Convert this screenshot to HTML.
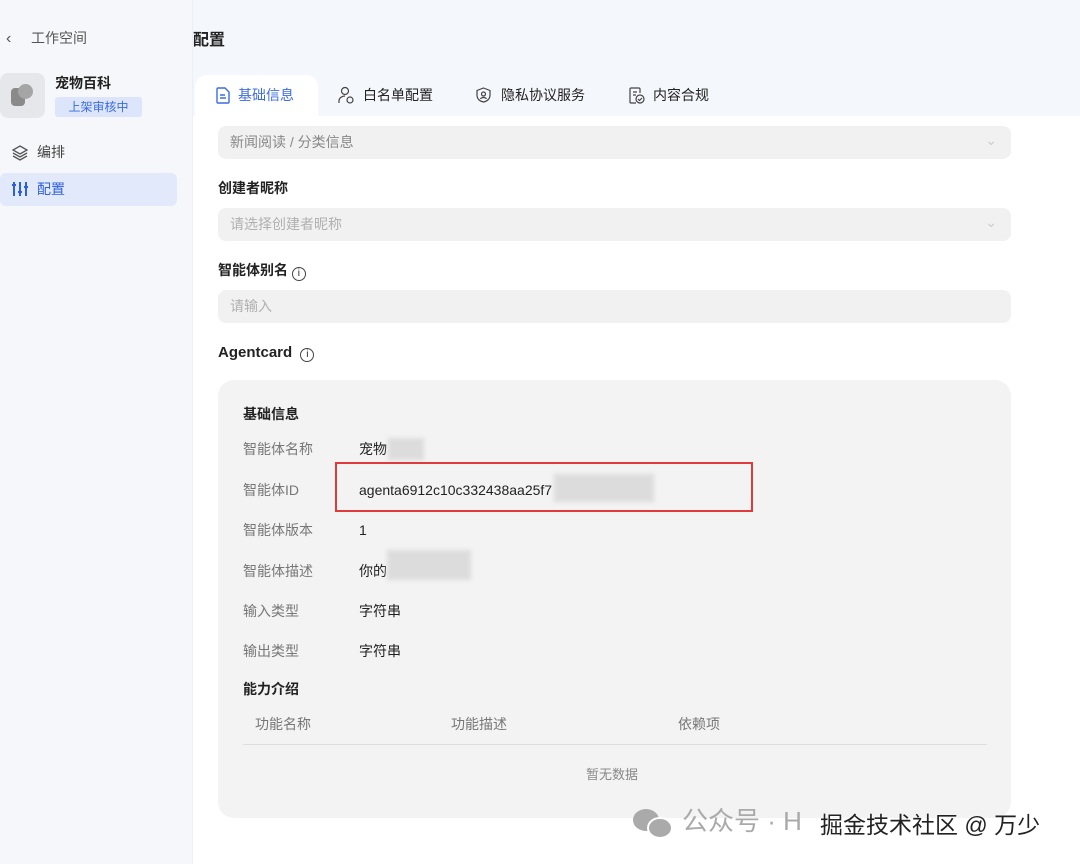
<!DOCTYPE html>
<html><head><meta charset="utf-8"><style>
*{margin:0;padding:0;box-sizing:border-box}
body{width:1080px;height:864px;overflow:hidden;background:#fff;font-family:"Liberation Sans","Noto Sans CJK SC",sans-serif;color:#222;position:relative;line-height:1.2}
.a{position:absolute;white-space:nowrap}
.side{position:absolute;left:0;top:0;width:193px;height:864px;background:#f5f7fb;border-right:1px solid #eceff4}
.topbar{position:absolute;left:193px;top:0;width:887px;height:128px;background:#f4f7fb}
.inp{position:absolute;left:218px;width:793px;height:33px;background:#f1f1f1;border-radius:8px;font-size:14px;color:#b0b0b0;padding:8px 12px}
.lab{font-size:14px;color:#777}
.val{font-size:14px;color:#222}
.blur{position:absolute;background:#dcdcdc;filter:blur(2px)}
</style></head><body>
<div style="position:absolute;left:0;top:0;width:1080px;height:3px;background:#eef0f3"></div>
<div class="side"></div>
<div class="topbar"></div>
<div class="a" style="left:6px;top:29px;font-size:16px;color:#555">‹</div>
<div class="a" style="left:31px;top:30px;font-size:14px;color:#555">工作空间</div>
<div class="a" style="left:0;top:73px;width:45px;height:45px;background:#e6e7ea;border-radius:8px"></div>
<div class="a" style="left:11px;top:88px;width:14px;height:18px;background:#8a8a8a;border-radius:4px"></div>
<div class="a" style="left:18px;top:84px;width:15px;height:15px;background:#a5a5a5;border-radius:50%"></div>
<div class="a" style="left:55px;top:75px;font-size:14px;font-weight:bold">宠物百科</div>
<div class="a" style="left:55px;top:97px;width:87px;height:20px;background:#dde5fb;border-radius:3px;color:#3c6ce0;font-size:12px;text-align:center;line-height:20px">上架审核中</div>
<svg class="a" style="left:11px;top:144px" width="18" height="18" viewBox="0 0 18 18" fill="none" stroke="#555" stroke-width="1.3"><path d="M9 2L16 6 9 10 2 6Z"/><path d="M2 9l7 4 7-4"/><path d="M2 12l7 4 7-4"/></svg>
<div class="a" style="left:37px;top:144px;font-size:14px;color:#444">编排</div>
<div class="a" style="left:0;top:173px;width:177px;height:33px;background:#e2e9fb;border-radius:6px"></div>
<svg class="a" style="left:11px;top:181px" width="18" height="16" viewBox="0 0 18 16" fill="none" stroke="#2d5fdc" stroke-width="2"><path d="M3 1v14M9 1v14M15 1v14"/><path d="M1 4h4M7 11h4M13 6h4"/></svg>
<div class="a" style="left:37px;top:181px;font-size:14px;color:#2d5fdc">配置</div>
<div class="a" style="left:193px;top:31px;font-size:16px;font-weight:bold">配置</div>
<div class="a" style="left:195px;top:75px;width:123px;height:53px;background:#fff;border-radius:12px 12px 0 0"></div>
<div style="position:absolute;left:193px;top:116px;width:887px;height:748px;background:#fff"></div>
<svg class="a" style="left:216px;top:87px" width="14" height="17" viewBox="0 0 14 17" fill="none" stroke="#3c6ce0" stroke-width="1.4"><path d="M1 2a1 1 0 011-1h7l4 4v10a1 1 0 01-1 1H2a1 1 0 01-1-1Z"/><path d="M4 8h5M4 11h6"/></svg>
<div class="a" style="left:238px;top:87px;font-size:14px;color:#3c6ce0">基础信息</div>
<svg class="a" style="left:338px;top:86px" width="17" height="18" viewBox="0 0 17 18" fill="none" stroke="#444" stroke-width="1.2"><circle cx="7" cy="5" r="3.5"/><path d="M1 17v-2c0-3 3-5 6-5"/><circle cx="12" cy="14" r="3"/></svg>
<div class="a" style="left:363px;top:87px;font-size:14px">白名单配置</div>
<svg class="a" style="left:476px;top:87px" width="15" height="16" viewBox="0 0 15 16" fill="none" stroke="#444" stroke-width="1.2"><path d="M7.5 1L14 3.5V8c0 4-3 6.5-6.5 7C4 14.5 1 12 1 8V3.5Z"/><circle cx="7.5" cy="7" r="2"/><path d="M4.5 12c1-2 5-2 6 0"/></svg>
<div class="a" style="left:501px;top:87px;font-size:14px">隐私协议服务</div>
<svg class="a" style="left:629px;top:87px" width="16" height="17" viewBox="0 0 16 17" fill="none" stroke="#444" stroke-width="1.2"><path d="M11 6V2a1 1 0 00-1-1H2a1 1 0 00-1 1v13a1 1 0 001 1h5"/><path d="M4 5h4M4 8h3"/><circle cx="11" cy="12" r="4"/><path d="M9 12l1.5 1.5L13 11"/></svg>
<div class="a" style="left:653px;top:87px;font-size:14px">内容合规</div>
<div class="inp" style="top:126px;color:#888">新闻阅读 / 分类信息<span style="position:absolute;right:14px;top:6px;color:#ccc">⌄</span></div>
<div class="a" style="left:218px;top:180px;font-size:14px;font-weight:bold">创建者昵称</div>
<div class="inp" style="top:208px">请选择创建者昵称<span style="position:absolute;right:14px;top:6px;color:#ccc">⌄</span></div>
<div class="a" style="left:218px;top:262px;font-size:14px;font-weight:bold">智能体别名 <span style="display:inline-block;width:14px;height:14px;border:1.2px solid #444;border-radius:50%;font-size:10px;text-align:center;line-height:12px;font-weight:normal;vertical-align:-1px">i</span></div>
<div class="inp" style="top:290px">请输入</div>
<div class="a" style="left:218px;top:344px;font-size:15px;font-weight:bold">Agentcard <span style="display:inline-block;width:14px;height:14px;border:1.2px solid #444;border-radius:50%;font-size:10px;text-align:center;line-height:12px;font-weight:normal;margin-left:4px;vertical-align:0">i</span></div>
<div class="a" style="left:218px;top:380px;width:793px;height:438px;background:#f3f3f3;border-radius:16px"></div>
<div class="a" style="left:243px;top:406px;font-size:14px;font-weight:bold">基础信息</div>
<div class="a lab" style="left:243px;top:441px">智能体名称</div><div class="a val" style="left:359px;top:441px">宠物</div><div class="blur" style="left:388px;top:438px;width:36px;height:22px"></div>
<div class="a lab" style="left:243px;top:482px">智能体ID</div><div class="a val" style="left:359px;top:482px">agenta6912c10c332438aa25f7</div><div class="blur" style="left:554px;top:474px;width:100px;height:28px"></div>
<div class="a" style="left:335px;top:462px;width:418px;height:50px;border:2px solid #e03a3a"></div>
<div class="a lab" style="left:243px;top:522px">智能体版本</div><div class="a val" style="left:359px;top:522px">1</div>
<div class="a lab" style="left:243px;top:563px">智能体描述</div><div class="a val" style="left:359px;top:563px">你的</div><div class="blur" style="left:387px;top:550px;width:84px;height:30px"></div>
<div class="a lab" style="left:243px;top:603px">输入类型</div><div class="a val" style="left:359px;top:603px">字符串</div>
<div class="a lab" style="left:243px;top:643px">输出类型</div><div class="a val" style="left:359px;top:643px">字符串</div>
<div class="a" style="left:243px;top:681px;font-size:14px;font-weight:bold">能力介绍</div>
<div class="a lab" style="left:255px;top:716px">功能名称</div>
<div class="a lab" style="left:451px;top:716px">功能描述</div>
<div class="a lab" style="left:678px;top:716px">依赖项</div>
<div class="a" style="left:243px;top:744px;width:744px;height:1px;background:#ddd"></div>
<div class="a" style="left:586px;top:767px;font-size:13px;color:#888">暂无数据</div>
<svg class="a" style="left:632px;top:808px" width="42" height="32" viewBox="0 0 42 32"><ellipse cx="14" cy="12" rx="13" ry="11" fill="#aaa"/><ellipse cx="28" cy="20" rx="12" ry="10" fill="#aaa" stroke="#fff" stroke-width="2"/></svg>
<div class="a" style="left:682px;top:806px;font-size:26px;color:#aaa">公众号 · H</div>
<div class="a" style="left:820px;top:812px;font-size:23px;color:#222;text-shadow:0 0 2px #fff,1px 1px 0 #fff">掘金技术社区 @ 万少</div>
</body></html>
